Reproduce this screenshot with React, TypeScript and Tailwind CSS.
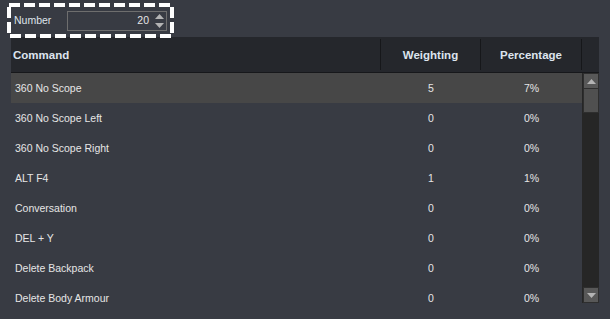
import React from 'react'

const rows = [
  { name: '360 No Scope', weight: 5, pct: '7%' },
  { name: '360 No Scope Left', weight: 0, pct: '0%' },
  { name: '360 No Scope Right', weight: 0, pct: '0%' },
  { name: 'ALT F4', weight: 1, pct: '1%' },
  { name: 'Conversation', weight: 0, pct: '0%' },
  { name: 'DEL + Y', weight: 0, pct: '0%' },
  { name: 'Delete Backpack', weight: 0, pct: '0%' },
  { name: 'Delete Body Armour', weight: 0, pct: '0%' },
]

const Arrow = ({ down = false }: { down?: boolean }) => (
  <svg width="9" height="5" viewBox="0 0 9 5">
    {down ? <polygon points="0,0 9,0 4.5,5" fill="#b4b4b4" /> : <polygon points="0,5 9,5 4.5,0" fill="#b4b4b4" />}
  </svg>
)

const App = () => {
  return (
    <div className="relative w-[610px] h-[319px] overflow-hidden bg-[#383b43] font-['Liberation_Sans',Arial,sans-serif] text-[10.5px] text-[#e6e6e6]">
      {/* number input */}
      <div className="flex items-center h-[37px] pl-[14px] pt-[5px]">
        <span className="w-[53px] text-[#dfe3ea]">Number</span>
        <div className="flex items-center justify-end w-[100px] h-[20px] border border-[#6e6e6e] pr-[2px]">
          <span className="mr-[6px]">20</span>
          <div className="flex flex-col items-center gap-[4px]">
            <Arrow />
            <Arrow down />
          </div>
        </div>
      </div>
      <svg className="absolute left-0 top-0" width="180" height="42">
        <rect x="9" y="5" width="163" height="31" fill="none" stroke="#ffffff" strokeWidth="4" strokeDasharray="11 4" />
      </svg>

      {/* table */}
      <div className="ml-[11px] w-[588px]">
        <div className="flex h-[36px] bg-[#25272c] border-b border-[#17181b] font-bold text-[11.5px] text-[#dde4ee]">
          <div className="flex items-center w-[370px] pl-[2px] pt-[3px] border-r border-[#16171a] my-[2px]">Command</div>
          <div className="flex items-center justify-center w-[100px] pt-[3px] border-r border-[#16171a] my-[2px]">Weighting</div>
          <div className="flex items-center justify-center w-[101px] pt-[3px] border-r border-[#16171a] my-[2px]">Percentage</div>
          <div className="flex-1" />
        </div>
        <div className="flex">
          <div className="w-[571px]">
            {rows.map((r, i) => (
              <div key={r.name} className={`flex items-center h-[30px] pt-[1px] ${i === 0 ? 'bg-[#474747]' : ''}`}>
                <div className="w-[370px] pl-[4px]">{r.name}</div>
                <div className="w-[100px] text-center">{r.weight}</div>
                <div className="w-[101px] text-center">{r.pct}</div>
              </div>
            ))}
          </div>
          <div className="flex flex-col w-[17px] h-[230px] bg-[#262626] border-l border-[#262626]">
            <div className="flex items-center justify-center h-[16px] bg-[#585858] border border-[#2e2e2e]">
              <Arrow />
            </div>
            <div className="h-[24px] bg-[#505050] border-x border-b border-[#2e2e2e]" />
            <div className="flex-1" />
            <div className="flex items-center justify-center h-[16px] bg-[#585858] border border-[#2e2e2e]">
              <Arrow down />
            </div>
          </div>
        </div>
      </div>
    </div>
  )
}

export default App
